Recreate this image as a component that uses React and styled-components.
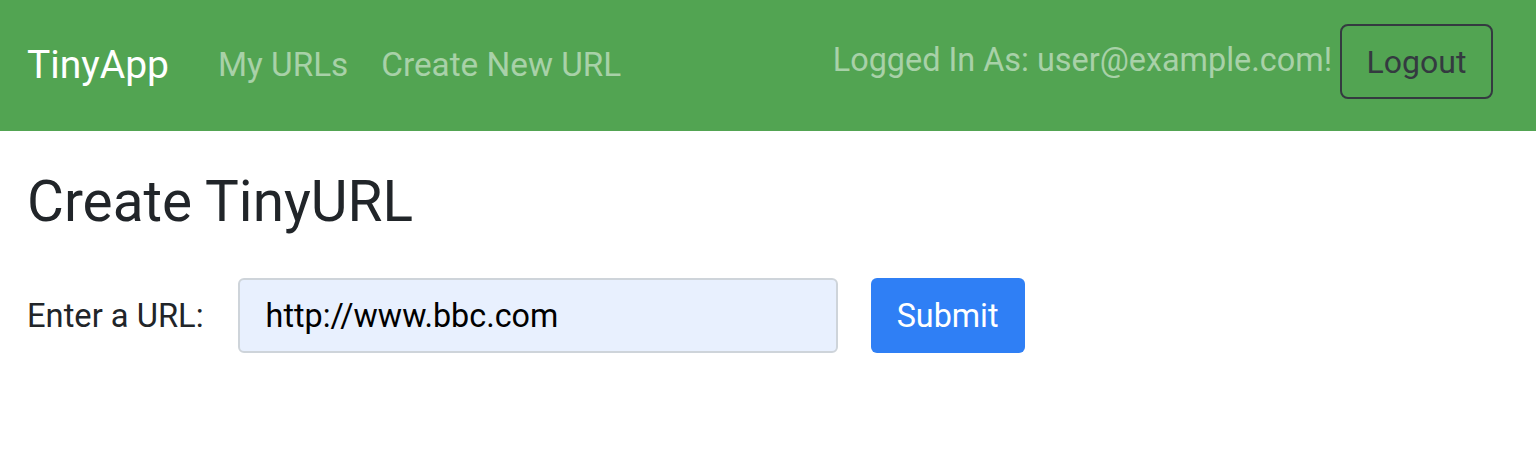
import React from 'react'
import styled, { createGlobalStyle } from 'styled-components'

const GlobalStyle = createGlobalStyle`
  html, body {
    margin: 0;
    padding: 0;
    background: #fff;
  }
  body {
    font-family: Roboto, "Liberation Sans", Arial, sans-serif;
    color: #212529;
  }
`

const Navbar = styled.nav`
  display: flex;
  align-items: center;
  height: 131px;
  padding: 0 43px 0 27px;
  background: #52a452;
  box-sizing: border-box;
`

const Brand = styled.a`
  font-size: 39px;
  color: #fff;
  text-decoration: none;
  margin-right: 49px;
  line-height: 1;
`

const NavLinks = styled.div`
  display: flex;
  gap: 33px;
  flex: 1;
`

const NavLink = styled.a`
  font-size: 33.3px;
  color: rgba(255, 255, 255, 0.5);
  text-decoration: none;
  line-height: 1;
  margin-top: -2px;
`

const UserArea = styled.div`
  display: flex;
  align-items: center;
  gap: 8px;
  align-self: flex-start;
  margin-top: 24px;
`

const UserText = styled.span`
  font-size: 32.4px;
  color: rgba(255, 255, 255, 0.5);
  margin-top: -3px;
`

const LogoutButton = styled.button`
  font-family: inherit;
  font-size: 32px;
  color: #343a40;
  background: transparent;
  border: 2px solid #343a40;
  border-radius: 8px;
  width: 153px;
  height: 75px;
  padding: 0;
  cursor: pointer;
`

const Main = styled.main`
  padding: 0 27px;
`

const Title = styled.h1`
  font-size: 56.7px;
  font-weight: 400;
  margin: 37px 0 42px;
  line-height: 1.2;
`

const Form = styled.form`
  display: flex;
  align-items: center;
`

const Label = styled.label`
  font-size: 32.7px;
  margin-right: 34px;
`

const Input = styled.input`
  box-sizing: border-box;
  width: 600px;
  height: 75px;
  padding: 0 26px;
  font-family: inherit;
  font-size: 32.3px;
  color: #000;
  background: #e8f0fe;
  border: 2px solid #ced4da;
  border-radius: 6px;
  margin-right: 33px;
  outline: none;
`

const SubmitButton = styled.button`
  box-sizing: border-box;
  width: 154px;
  height: 75px;
  font-family: inherit;
  font-size: 32.3px;
  color: #fff;
  background: #2f7ff5;
  border: none;
  border-radius: 6px;
  cursor: pointer;
`

export default function App() {
  return (
    <>
      <GlobalStyle />
      <Navbar>
        <Brand href="#">TinyApp</Brand>
        <NavLinks>
          <NavLink href="#">My URLs</NavLink>
          <NavLink href="#">Create New URL</NavLink>
        </NavLinks>
        <UserArea>
          <UserText>Logged In As: user@example.com!</UserText>
          <LogoutButton>Logout</LogoutButton>
        </UserArea>
      </Navbar>
      <Main>
        <Title>Create TinyURL</Title>
        <Form onSubmit={e => e.preventDefault()}>
          <Label>Enter a URL:</Label>
          <Input type="text" defaultValue="http://www.bbc.com" />
          <SubmitButton type="submit">Submit</SubmitButton>
        </Form>
      </Main>
    </>
  )
}
